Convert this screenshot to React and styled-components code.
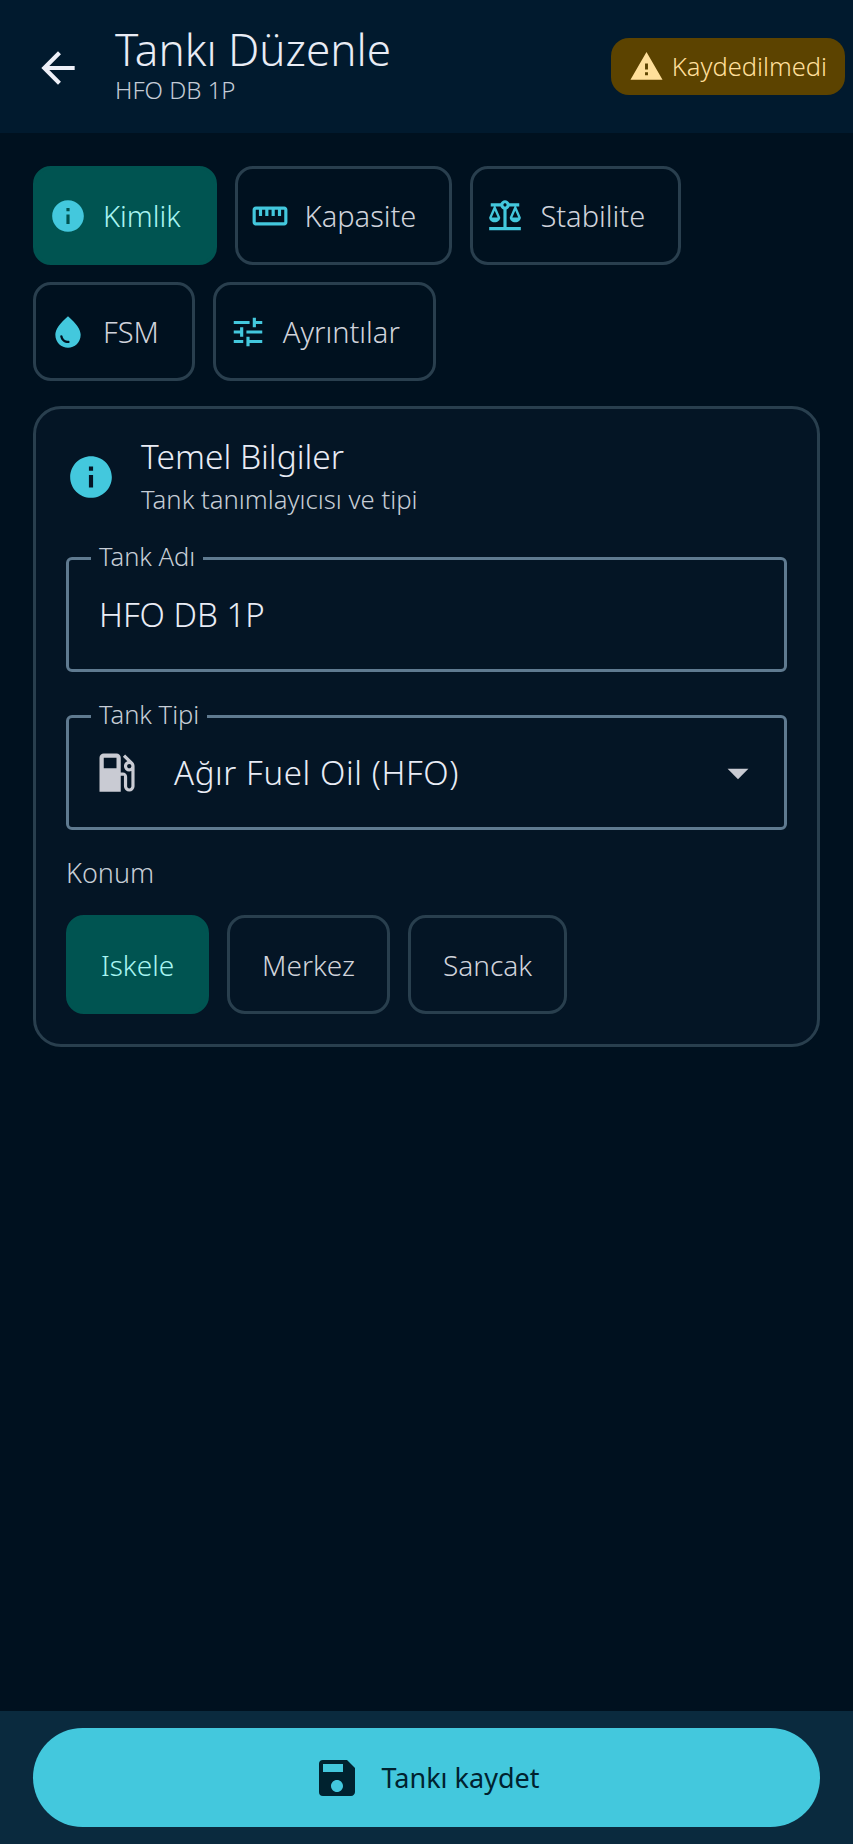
import React from 'react';
import styled, { createGlobalStyle } from 'styled-components';
import {
  MdArrowBack,
  MdArrowDropDown,
  MdBalance,
  MdInfo,
  MdLocalGasStation,
  MdOutlineStraighten,
  MdSave,
  MdTune,
  MdWarning,
  MdWaterDrop,
} from 'react-icons/md';

const GlobalStyle = createGlobalStyle`
  html, body {
    margin: 0;
    padding: 0;
    background: #00111f;
  }
  * {
    box-sizing: border-box;
  }
`;

const Screen = styled.div`
  display: flex;
  flex-direction: column;
  height: 100vh;
  font-family: "Noto Sans", sans-serif;
  font-weight: 300;
  background: #00111f;
  color: #e2e5ee;
`;

const Header = styled.header`
  display: flex;
  align-items: center;
  justify-content: space-between;
  height: 133px;
  padding: 0 8px 0 33px;
  background: #011a2e;
`;

const HeaderLeft = styled.div`
  display: flex;
  align-items: center;
  gap: 32px;
`;

const BackIcon = styled(MdArrowBack)`
  font-size: 50px;
  color: #eef0f8;
  margin-top: 2px;
`;

const Titles = styled.div`
  display: flex;
  flex-direction: column;
  margin-top: -6px;
`;

const Title = styled.div`
  font-size: 44px;
  line-height: 52px;
  color: #e9ecf5;
`;

const Subtitle = styled.div`
  font-size: 24px;
  line-height: 30px;
  color: #c3cbd6;
`;

const Badge = styled.div`
  display: flex;
  align-items: center;
  gap: 8px;
  height: 57px;
  padding: 0 18px;
  border-radius: 18px;
  background: #5c4300;
  color: #ffdf9a;
  font-size: 25.5px;
  margin-top: -1px;
`;

const BadgeIcon = styled(MdWarning)`
  font-size: 35px;
`;

const Content = styled.main`
  flex: 1;
  display: flex;
  flex-direction: column;
  gap: 25px;
  padding: 33px 33px 0;
`;

const Chips = styled.div`
  display: flex;
  flex-wrap: wrap;
  gap: 17px 18px;
  max-width: 700px;
`;

const Chip = styled.div`
  display: flex;
  align-items: center;
  gap: 16px;
  height: 99px;
  padding: 0 33px 0 13px;
  border-radius: 18px;
  font-size: 29px;
  background: ${props => (props.$active ? '#005451' : 'transparent')};
  border: 3px solid ${props => (props.$active ? '#005451' : '#293f4e')};
  color: ${props => (props.$active ? '#a8f4f2' : '#d0d3db')};

  svg {
    flex: none;
    font-size: 38px;
    color: #43c8dd;
  }
`;

const Card = styled.section`
  display: flex;
  flex-direction: column;
  padding: 26px 30px 30px;
  border: 3px solid #293f4e;
  border-radius: 28px;
  background: #041525;
`;

const CardHeader = styled.div`
  display: flex;
  align-items: center;
  gap: 25px;
  margin-bottom: 39px;
`;

const CardIcon = styled(MdInfo)`
  font-size: 50px;
  color: #43c8dd;
`;

const CardTitle = styled.div`
  font-size: 33.5px;
  line-height: 42px;
  color: #e9ecf5;
`;

const CardSubtitle = styled.div`
  font-size: 25.7px;
  line-height: 36px;
  margin-top: 5px;
  color: #c6cdd6;
`;

const Field = styled.div`
  position: relative;
  display: flex;
  align-items: center;
  height: 115px;
  padding: 0 21px 0 30px;
  margin-bottom: ${props => (props.$last ? '25px' : '43px')};
  border: 3px solid #5f7a90;
  border-radius: 6px;
  font-size: 33px;
  color: #e9ecf5;
`;

const FieldLabel = styled.label`
  position: absolute;
  top: -19px;
  left: 22px;
  padding: 0 8px;
  background: #041525;
  font-size: 25.5px;
  line-height: 30px;
  color: #c6cdd6;
`;

const FuelIcon = styled(MdLocalGasStation)`
  font-size: 51px;
  color: #c9cbd3;
  margin: 0 32px 0 -8px;
`;

const SelectValue = styled.span`
  letter-spacing: 0.6px;
`;

const DropIcon = styled(MdArrowDropDown)`
  margin-left: auto;
  font-size: 50px;
  color: #c9cbd3;
`;

const SectionLabel = styled.div`
  font-size: 27px;
  line-height: 36px;
  margin-bottom: 24px;
  color: #c6cdd6;
`;

const Segments = styled.div`
  display: flex;
  gap: 18px;
`;

const Segment = styled.div`
  display: flex;
  align-items: center;
  height: 99px;
  padding: 0 32px;
  border-radius: 18px;
  font-size: 28px;
  background: ${props => (props.$active ? '#005451' : 'transparent')};
  border: 3px solid ${props => (props.$active ? '#005451' : '#293f4e')};
  color: ${props => (props.$active ? '#a8f4f2' : '#d0d3db')};
`;

const BottomBar = styled.footer`
  height: 133px;
  padding: 17px 33px;
  background: #0a2a3e;
`;

const SaveButton = styled.div`
  display: flex;
  align-items: center;
  justify-content: center;
  gap: 20px;
  height: 99px;
  border-radius: 50px;
  background: #43c8dd;
  color: #00222f;
  font-size: 27px;
  font-weight: 400;

  svg {
    font-size: 48px;
  }
`;

const App = () => {
  return (
    <Screen>
      <GlobalStyle />
      <Header>
        <HeaderLeft>
          <BackIcon />
          <Titles>
            <Title>Tankı Düzenle</Title>
            <Subtitle>HFO DB 1P</Subtitle>
          </Titles>
        </HeaderLeft>
        <Badge>
          <BadgeIcon />
          Kaydedilmedi
        </Badge>
      </Header>
      <Content>
        <Chips>
          <Chip $active><MdInfo />Kimlik</Chip>
          <Chip><MdOutlineStraighten />Kapasite</Chip>
          <Chip><MdBalance />Stabilite</Chip>
          <Chip><MdWaterDrop />FSM</Chip>
          <Chip><MdTune />Ayrıntılar</Chip>
        </Chips>
        <Card>
          <CardHeader>
            <CardIcon />
            <div>
              <CardTitle>Temel Bilgiler</CardTitle>
              <CardSubtitle>Tank tanımlayıcısı ve tipi</CardSubtitle>
            </div>
          </CardHeader>
          <Field>
            <FieldLabel>Tank Adı</FieldLabel>
            HFO DB 1P
          </Field>
          <Field $last>
            <FieldLabel>Tank Tipi</FieldLabel>
            <FuelIcon />
            <SelectValue>Ağır Fuel Oil (HFO)</SelectValue>
            <DropIcon />
          </Field>
          <SectionLabel>Konum</SectionLabel>
          <Segments>
            <Segment $active>Iskele</Segment>
            <Segment>Merkez</Segment>
            <Segment>Sancak</Segment>
          </Segments>
        </Card>
      </Content>
      <BottomBar>
        <SaveButton>
          <MdSave />
          Tankı kaydet
        </SaveButton>
      </BottomBar>
    </Screen>
  );
};

export default App;
